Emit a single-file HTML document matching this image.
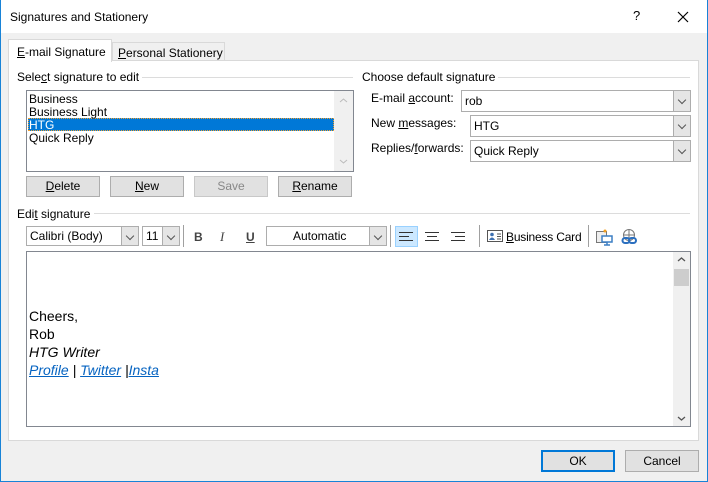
<!DOCTYPE html>
<html><head><style>
*{box-sizing:border-box;margin:0;padding:0}
body{width:708px;height:482px;overflow:hidden;font-family:"Liberation Sans",sans-serif;font-size:12px;color:#000;position:relative;background:#f0f0f0}
.a{position:absolute}
.win{left:0;top:0;width:708px;height:482px;border:1px solid #1883d7;border-top:none}
.t{white-space:nowrap;line-height:14px}
.btn{position:absolute;background:#e1e1e1;border:1px solid #adadad;text-align:center;line-height:19px;font-size:12px}
.combo{position:absolute;background:#fff;border:1px solid #adadad;line-height:20px;padding-left:3px;font-size:12px}
.combo .dd{position:absolute;right:0;top:0;bottom:0;width:17px;background:#e5e5e5;border-left:1px solid #adadad}
.combo .dd:after{content:"";position:absolute;left:5px;top:6px;width:5px;height:5px;border-right:1px solid #555;border-bottom:1px solid #555;transform:rotate(45deg)}
.hl{position:absolute;height:1px;background:#dcdcdc}
.sep{position:absolute;width:1px;height:22px;background:#a0a0a0}
u{text-decoration:underline}
</style></head><body>
<div class="a" style="left:0;top:0;width:708px;height:33px;background:#fff"></div>
<div class="a win"></div>
<div class="a t" style="left:10px;top:10px;font-size:12px">Signatures and Stationery</div>
<div class="a t" style="left:633px;top:9px;font-size:13px">?</div>
<svg class="a" style="left:677px;top:11px" width="12" height="12"><path d="M1 1L11 11M11 1L1 11" stroke="#000" stroke-width="1.2"/></svg>

<div class="a" style="left:8px;top:60px;width:691px;height:381px;background:#fff;border:1px solid #d9d9d9"></div>
<div class="a" style="left:112px;top:42px;width:113px;height:19px;background:#f0f0f0;border:1px solid #d9d9d9"></div>
<div class="a t" style="left:118px;top:46px"><u>P</u>ersonal Stationery</div>
<div class="a" style="left:8px;top:39px;width:104px;height:23px;background:#fff;border:1px solid #d9d9d9;border-bottom:none"></div>
<div class="a t" style="left:17px;top:45px"><u>E</u>-mail Signature</div>

<div class="a t" style="left:17px;top:70px">Sele<u>c</u>t signature to edit</div>
<div class="hl" style="left:142px;top:77px;width:211px"></div>
<div class="a" style="left:26px;top:90px;width:328px;height:82px;border:1px solid #828790;background:#fff"></div>
<div class="a" style="left:334px;top:91px;width:19px;height:80px;background:#f0f0f0"></div>
<svg class="a" style="left:339px;top:97px" width="9" height="68"><path d="M1 5L4.5 2L8 5M1 63L4.5 66L8 63" stroke="#bbb" fill="none"/></svg>
<div class="a" style="left:28px;top:118px;width:306px;height:13px;background:#0078d7;border:1px dotted #f0a030"></div>
<div class="a t" style="left:29px;top:93px;line-height:13px">Business<br>Business Light<br><span style="color:#fff">HTG</span><br>Quick Reply</div>
<div class="btn" style="left:26px;top:176px;width:74px;height:21px"><u>D</u>elete</div>
<div class="btn" style="left:110px;top:176px;width:74px;height:21px"><u>N</u>ew</div>
<div class="btn" style="left:194px;top:176px;width:74px;height:21px;color:#888;border-color:#c8c8c8">Save</div>
<div class="btn" style="left:278px;top:176px;width:74px;height:21px"><u>R</u>ename</div>

<div class="a t" style="left:362px;top:70px">Choose default signature</div>
<div class="hl" style="left:498px;top:77px;width:192px"></div>
<div class="a t" style="left:371px;top:91px">E-mail <u>a</u>ccount:</div>
<div class="a t" style="left:371px;top:116px">New <u>m</u>essages:</div>
<div class="a t" style="left:371px;top:141px">Replies/<u>f</u>orwards:</div>
<div class="combo" style="left:461px;top:90px;width:230px;height:22px">rob<div class="dd"></div></div>
<div class="combo" style="left:470px;top:115px;width:221px;height:22px">HTG<div class="dd"></div></div>
<div class="combo" style="left:470px;top:140px;width:221px;height:22px">Quick Reply<div class="dd"></div></div>

<div class="a t" style="left:17px;top:207px">Edi<u>t</u> signature</div>
<div class="hl" style="left:94px;top:213px;width:596px"></div>
<div class="combo" style="left:26px;top:226px;width:113px;height:20px;line-height:18px">Calibri (Body)<div class="dd"></div></div>
<div class="combo" style="left:142px;top:226px;width:38px;height:20px;line-height:18px">11<div class="dd"></div></div>
<div class="sep" style="left:183px;top:225px"></div>
<div class="a t" style="left:194px;top:230px;font-weight:bold;color:#444">B</div>
<div class="a t" style="left:220px;top:230px;font-style:italic;font-family:'Liberation Serif',serif;color:#444;font-size:13px">I</div>
<div class="a t" style="left:246px;top:230px;color:#444;font-weight:bold"><u>U</u></div>
<div class="combo" style="left:266px;top:226px;width:121px;height:20px;line-height:18px;padding-left:26px">Automatic<div class="dd"></div></div>
<div class="sep" style="left:390px;top:225px"></div>
<div class="a" style="left:395px;top:226px;width:23px;height:21px;background:#cce8ff;border:1px solid #99d1ff"></div>
<svg class="a" style="left:398px;top:230px" width="90" height="14"><g stroke="#333" stroke-width="1"><path d="M1 2.5H15M1 6.5H11M1 10.5H15"/><path d="M27 2.5H41M29 6.5H39M27 10.5H41"/><path d="M53 2.5H67M57 6.5H67M53 10.5H67"/></g></svg>
<div class="sep" style="left:479px;top:225px"></div>
<svg class="a" style="left:487px;top:230px" width="16" height="12"><rect x="0.5" y="0.5" width="15" height="11" fill="#fff" stroke="#555"/><circle cx="5" cy="4.5" r="1.8" fill="#3c6fb0"/><path d="M2 10Q5 5 8 10Z" fill="#3c6fb0"/><path d="M10 4H14M10 6.5H14M10 9H14" stroke="#555"/></svg>
<div class="a t" style="left:506px;top:230px;letter-spacing:-0.2px"><u>B</u>usiness Card</div>
<div class="sep" style="left:588px;top:225px"></div>
<svg class="a" style="left:595px;top:228px" width="18" height="18"><rect x="1.5" y="3.5" width="10" height="11" fill="#eee" stroke="#777"/><circle cx="10" cy="3" r="1.5" fill="#f4a020"/><rect x="7" y="8" width="10" height="6" fill="#fff" stroke="#3c7fc4" stroke-width="1.5"/><path d="M12 14V17M9 17H15" stroke="#3c7fc4" stroke-width="1.5"/></svg>
<svg class="a" style="left:621px;top:228px" width="18" height="18"><circle cx="8" cy="7" r="5.5" fill="none" stroke="#777"/><path d="M2.5 7H13.5M8 1.5V12.5" stroke="#777"/><rect x="1.5" y="10" width="7" height="5" rx="2.5" fill="none" stroke="#2b6fbf" stroke-width="2"/><rect x="8" y="10" width="7" height="5" rx="2.5" fill="none" stroke="#2b6fbf" stroke-width="2"/></svg>

<div class="a" style="left:26px;top:251px;width:665px;height:176px;background:#fff;border:1px solid #828790"></div>
<div class="a" style="left:673px;top:252px;width:17px;height:174px;background:#f0f0f0"></div>
<div class="a" style="left:674px;top:269px;width:15px;height:17px;background:#cdcdcd"></div>
<svg class="a" style="left:677px;top:256px" width="9" height="166"><path d="M1 5L4.5 2L8 5M1 161L4.5 164L8 161" stroke="#555" fill="none" stroke-width="1.3"/></svg>
<div class="a t" style="left:29px;top:307px;font-size:14px;line-height:18px">Cheers,<br>Rob<br><i>HTG Writer</i><br><i style="color:#0563c1"><u>Profile</u></i> <i>|</i> <i style="color:#0563c1"><u>Twitter</u></i> <i>|</i><i style="color:#0563c1"><u>Insta</u></i></div>

<div class="btn" style="left:541px;top:450px;width:74px;height:22px;border:2px solid #0078d7;line-height:18px">OK</div>
<div class="btn" style="left:625px;top:450px;width:74px;height:22px;line-height:20px">Cancel</div>
</body></html>
